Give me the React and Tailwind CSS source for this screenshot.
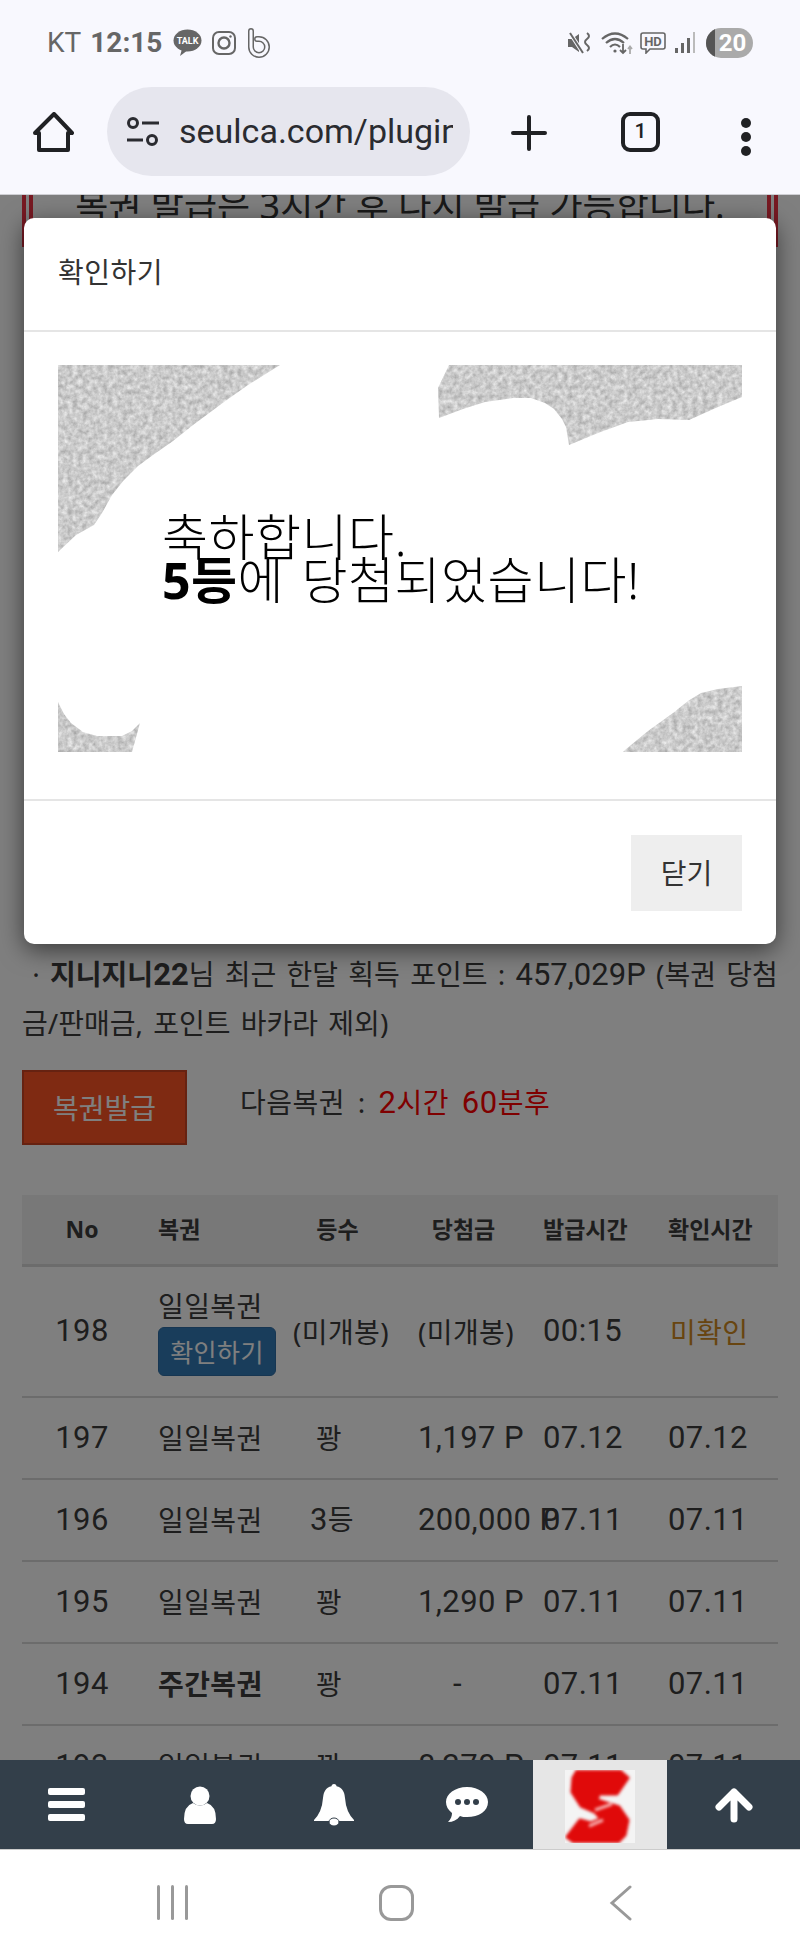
const FONT = 'font-["Noto_Sans","Noto_Sans_CJK_KR",sans-serif]';

const rows = [
  { no: '197', name: '일일복권', rank: '꽝', rankPad: 'pl-[23px]', prize: '1,197 P', issued: '07.12', checked: '07.12' },
  { no: '196', name: '일일복권', rank: '등', rankNum: '3', rankPad: 'pl-[17px]', prize: '200,000 P', issued: '07.11', checked: '07.11' },
  { no: '195', name: '일일복권', rank: '꽝', rankPad: 'pl-[23px]', prize: '1,290 P', issued: '07.11', checked: '07.11' },
  { no: '194', name: '주간복권', bold: true, rank: '꽝', rankPad: 'pl-[23px]', prize: '-', issued: '07.11', checked: '07.11' },
  { no: '193', name: '일일복권', rank: '꽝', rankPad: 'pl-[23px]', prize: '8,270 P', issued: '07.11', checked: '07.11' },
];

const COLS = 'grid grid-cols-[136px_135px_125px_125px_125px_110px] items-center';

function StatusBar() {
  return (
    <div className="flex h-[80px] items-center justify-between pl-[47px] pr-[47px] pt-[5px] text-[#666]">
      <div className="flex items-center">
        <span className='font-["Roboto",sans-serif] text-[28px]'>KT</span>
        <span className='ml-[9px] font-["Roboto",sans-serif] text-[28px] font-bold'>12:15</span>
        <svg className="ml-[11px]" width="29" height="27" viewBox="0 0 29 27">
          <ellipse cx="14.5" cy="11.5" rx="14" ry="11" fill="#666" />
          <path d="M9 20 L7 27 L15 21 Z" fill="#666" />
          <text x="14.5" y="15" textAnchor="middle" fontSize="9" fontWeight="700" fill="#fff" fontFamily="Roboto">TALK</text>
        </svg>
        <svg className="ml-[10px]" width="24" height="24" viewBox="0 0 24 24" fill="none" stroke="#666" strokeWidth="2">
          <rect x="1" y="1" width="22" height="22" rx="6" />
          <circle cx="12" cy="12" r="5.5" strokeWidth="2.4" />
          <circle cx="18.5" cy="5.5" r="1.2" fill="#666" stroke="none" />
        </svg>
        <svg className="ml-[11px]" width="23" height="30" viewBox="0 0 23 30" fill="none">
          <path d="M4 3 V19 a8 8 0 1 0 8 -8 h-2" stroke="#666" strokeWidth="6" strokeLinecap="round" />
          <path d="M4 3 V19 a8 8 0 1 0 8 -8 h-2" stroke="#f8f8fe" strokeWidth="3" strokeLinecap="round" />
        </svg>
      </div>
      <div className="flex items-center">
        <svg width="24" height="22" viewBox="0 0 24 22">
          <path d="M0 7 H4 L11 2 V20 L4 15 H0 Z" fill="#666" />
          <path d="M2 1 L15 21" stroke="#f8f8fe" strokeWidth="4" />
          <path d="M2 1 L15 21" stroke="#666" strokeWidth="2" />
          <path d="M19 1 q4 3 0 6 q-4 3 0 6 q4 3 0 6" fill="none" stroke="#666" strokeWidth="2" />
        </svg>
        <svg className="ml-[9px]" width="33" height="24" viewBox="0 0 33 24" fill="none" stroke="#666" strokeWidth="2.2">
          <path d="M1 8 Q14 -3 27 8" />
          <path d="M5 12 Q14 4 23 12" />
          <path d="M9 16 Q14 11 19 16" />
          <circle cx="14" cy="20" r="1.6" fill="#666" stroke="none" />
          <path d="M22 13 V22 M19 19 L22 22 L25 19" strokeWidth="1.8" />
          <path d="M29 23 V16 M27 18 L29 15.500 L31 18" stroke="#aaa" strokeWidth="1.8" />
        </svg>
        <svg className="ml-[6px]" width="26" height="22" viewBox="0 0 26 22">
          <path d="M3 1 H23 a2 2 0 0 1 2 2 V15 a2 2 0 0 1 -2 2 H10 L6 21 V17 H3 a2 2 0 0 1 -2 -2 V3 a2 2 0 0 1 2 -2 Z" fill="none" stroke="#666" strokeWidth="1.6" />
          <text x="13" y="14" textAnchor="middle" fontSize="13" fontWeight="700" fill="#666" fontFamily="Roboto">HD</text>
        </svg>
        <svg className="ml-[9px]" width="20" height="22" viewBox="0 0 20 22">
          <rect x="0" y="16" width="3" height="5" fill="#666" />
          <rect x="6" y="11" width="3" height="10" fill="#666" />
          <rect x="12" y="6" width="3" height="15" fill="#666" />
          <rect x="18" y="0" width="2" height="21" fill="#bbb" />
        </svg>
        <div className="relative ml-[11px] flex h-[30px] w-[47px] items-center justify-center overflow-hidden rounded-full bg-[#aaa]">
          <div className="absolute inset-y-0 left-0 w-[9px] bg-[#555]" />
          <span className='relative pl-[6px] font-["Roboto",sans-serif] text-[24px] font-bold text-white'>20</span>
        </div>
      </div>
    </div>
  );
}

function BrowserBar() {
  return (
    <div className="flex h-[115px] items-start border-b border-[#cfcfd4] pt-[7px]">
      <svg className="ml-[33px] mt-[25px] shrink-0" width="41" height="41" viewBox="0 0 41 41" fill="none" stroke="#202124" strokeWidth="4" strokeLinejoin="round">
        <path d="M21 2 L39 21 H35 V38 H6 V21 H2 Z" />
      </svg>
      <div className="ml-[33px] flex h-[89px] w-[363px] shrink-0 items-center overflow-hidden rounded-full bg-[#e6e6ee] pl-[20px] pr-[17px]">
        <svg className="shrink-0" width="32" height="30" viewBox="0 0 32 30" fill="none" stroke="#2a2b30" strokeWidth="3">
          <circle cx="6" cy="6" r="4.500" />
          <path d="M15 6 H32" />
          <path d="M0 23 H16" />
          <circle cx="25" cy="23" r="4.500" />
        </svg>
        <div className='ml-[20px] overflow-hidden whitespace-nowrap font-["Roboto",sans-serif] text-[34px] text-[#2a2b30]'>seulca.com/plugin/lotto</div>
      </div>
      <svg className="ml-[41px] mt-[28px] shrink-0" width="36" height="36" viewBox="0 0 36 36" stroke="#202124" strokeWidth="4" strokeLinecap="round">
        <path d="M18 2 V34 M2 18 H34" />
      </svg>
      <div className='ml-[74px] mt-[25px] flex h-[40px] w-[39px] shrink-0 items-center justify-center rounded-[9px] border-[4px] border-[#202124] font-["Roboto",sans-serif] text-[21px] font-medium text-[#202124]'>1</div>
      <div className="ml-[81px] mt-[31px] flex shrink-0 flex-col gap-[4px]">
        <div className="h-[10px] w-[10px] rounded-full bg-[#202124]" />
        <div className="h-[10px] w-[10px] rounded-full bg-[#202124]" />
        <div className="h-[10px] w-[10px] rounded-full bg-[#202124]" />
      </div>
    </div>
  );
}

function NoiseCorners() {
  return (
    <svg className="absolute inset-0" width="684" height="387" viewBox="0 0 684 387">
      <defs>
        <filter id="grain" x="0" y="0" width="100%" height="100%" colorInterpolationFilters="sRGB">
          <feTurbulence type="fractalNoise" baseFrequency="0.2" numOctaves="3" seed="4" />
          <feColorMatrix values="0.35 0 0 0 0.62  0.35 0 0 0 0.62  0.35 0 0 0 0.62  0 0 0 0 1" />
        </filter>
        <clipPath id="corners">
          <path d="M0 0 H222 L190 20 L166 37 L135 60 L115 76 L95 90 L80 101 L66 115 L54 130 L44 148 L36 160 L18 170 L0 187 Z" />
          <path d="M391 0 L380 23 L381 53 L405 44 L427 37 L455 33 L473 33 L487 38 L496 44 L504 54 L508 62 L511 80 L540 68 L570 57 L600 54 L631 55 L660 42 L684 32 V0 Z" />
          <path d="M0 337 L6 349 L13 358 L25 367 L39 371 L64 371 L74 366 L82 358 L74 387 H0 Z" />
          <path d="M684 321 L660 324 L643 328 L630 336 L615 348 L590 366 L567 385 L565 387 H684 Z" />
        </clipPath>
      </defs>
      <rect width="684" height="387" filter="url(#grain)" clipPath="url(#corners)" />
    </svg>
  );
}

function Modal() {
  return (
    <div className="absolute left-[24px] top-[23px] flex h-[726px] w-[752px] flex-col rounded-[10px] bg-white shadow-[0_6px_24px_rgba(0,0,0,0.55)]">
      <div className="flex h-[114px] shrink-0 items-start border-b-[2px] border-[#e5e5e5] pl-[34px] pt-[34px] text-[28px] leading-[40px] tracking-[0.5px] text-[#333]">확인하기</div>
      <div className="shrink-0 px-[34px] pt-[33px]">
        <div className="relative flex h-[387px] w-[684px] items-center pl-[104px] text-[50px] font-light leading-[43px] tracking-[0.5px] text-black [word-spacing:4px]">
          <NoiseCorners />
          <div className="relative whitespace-nowrap">
            축하합니다.
            <br />
            <span className="font-bold">5등</span>에 당첨되었습니다!
          </div>
        </div>
      </div>
      <div className="mt-[47px] flex flex-1 items-start justify-end border-t-[2px] border-[#e5e5e5] pr-[34px] pt-[34px]">
        <div className="flex h-[76px] w-[111px] items-center justify-center bg-[#eeeeee] text-[28px] text-[#333]">닫기</div>
      </div>
    </div>
  );
}

function Num({ children }) {
  return <span className='font-["Roboto",sans-serif] text-[31px] font-normal'>{children}</span>;
}

function LotteryTable() {
  return (
    <div className="mx-[22px] mt-[50px] text-[#3c3c3c]">
      <div className={`${COLS} h-[72px] border-b-[3px] border-[#d8d8d8] bg-[#f0f0f0] text-[23px] font-bold`}>
        <div className="pr-[16px] text-center">No</div>
        <div>복권</div>
        <div className="pr-[36px] text-center">등수</div>
        <div className="pr-[34px] text-center">당첨금</div>
        <div>발급시간</div>
        <div>확인시간</div>
      </div>
      <div className={`${COLS} h-[131px] border-b-[2px] border-[#d8d8d8] whitespace-nowrap text-[28px] tracking-[0.4px]`}>
        <div className="pr-[16px] text-center"><Num>198</Num></div>
        <div className="leading-[38px]">
          <div>일일복권</div>
          <div className="mt-[2px] flex h-[49px] w-[118px] items-center justify-center rounded-[6px] border border-[#2e6da4] bg-[#337ab7] text-[25px] text-white">확인하기</div>
        </div>
        <div>(미개봉)</div>
        <div>(미개봉)</div>
        <div><Num>00:15</Num></div>
        <div className="pl-[2px] text-[#d08a22]">미확인</div>
      </div>
      {rows.map((row) => (
        <div key={row.no} className={`${COLS} h-[82px] border-b-[2px] border-[#d8d8d8] whitespace-nowrap text-[28px] tracking-[0.4px]`}>
          <div className="pr-[16px] text-center"><Num>{row.no}</Num></div>
          <div className={row.bold ? 'font-bold' : ''}>{row.name}</div>
          <div className={row.rankPad}>{row.rankNum && <Num>{row.rankNum}</Num>}{row.rank}</div>
          <div className={row.prize === '-' ? 'pl-[35px]' : ''}><Num>{row.prize}</Num></div>
          <div><Num>{row.issued}</Num></div>
          <div><Num>{row.checked}</Num></div>
        </div>
      ))}
    </div>
  );
}

function BottomNav() {
  return (
    <div className="relative z-10 flex h-[90px] shrink-0 border-b border-[#cccccc] bg-[#333f4a]">
      <div className="flex w-[133px] items-center justify-center">
        <div className="flex flex-col gap-[6px]">
          <div className="h-[7px] w-[37px] rounded-[2px] bg-white" />
          <div className="h-[7px] w-[37px] rounded-[2px] bg-white" />
          <div className="h-[7px] w-[37px] rounded-[2px] bg-white" />
        </div>
      </div>
      <div className="flex w-[134px] items-center justify-center">
        <svg width="32" height="38" viewBox="0 0 32 38" fill="#fff">
          <circle cx="16" cy="10" r="9.500" />
          <path d="M9 17 Q16 22 23 17 Q32 20 32 33 Q32 38 28 38 H4 Q0 38 0 33 Q0 20 9 17 Z" />
        </svg>
      </div>
      <div className="flex w-[133px] items-center justify-center">
        <svg width="40" height="42" viewBox="0 0 40 42" fill="#fff">
          <circle cx="20" cy="2.500" r="2.500" />
          <path d="M20 2 Q30 2 31 14 Q32 28 40 36 V37 H0 V36 Q8 28 9 14 Q10 2 20 2 Z" />
          <ellipse cx="20" cy="38" rx="5" ry="4" fill="#fff" stroke="#333f4a" strokeWidth="1" />
        </svg>
      </div>
      <div className="flex w-[133px] items-center justify-center">
        <svg width="44" height="36" viewBox="0 0 44 36">
          <path d="M22 0 C34 0 43 7 43 15 C43 24 34 30 22 30 C19 30 17 30 15 29 C12 33 8 35 3 35 C6 32 7 29 7 26 C3 23 1 19 1 15 C1 7 10 0 22 0 Z" fill="#fff" />
          <circle cx="13" cy="15" r="3" fill="#333f4a" />
          <circle cx="22" cy="15" r="3" fill="#333f4a" />
          <circle cx="31" cy="15" r="3" fill="#333f4a" />
        </svg>
      </div>
      <div className="flex w-[134px] items-end justify-center bg-[#e6e6e6] pb-[6px]">
        <div className="h-[73px] w-[70px] overflow-hidden bg-[#f4f4f4]">
          <svg className="blur-[1.5px]" width="70" height="73" viewBox="0 0 70 73">
            <path d="M12 1 H55 L63 8 L52 24 H34 L32 30 L54 37 L63 50 L60 65 L53 72 H9 L2 67 L15 50 L26 53 L36 49 L30 42 L16 36 L7 22 L8 8 Z" fill="#e00a0a" stroke="#e00a0a" strokeWidth="3" strokeLinejoin="round" />
            <path d="M30 40 L47 34 M24 56 L38 50" stroke="#f6b0b0" strokeWidth="3" />
          </svg>
        </div>
      </div>
      <div className="flex w-[133px] items-center justify-center">
        <svg width="38" height="36" viewBox="0 0 38 36" fill="none" stroke="#fff" strokeWidth="7" strokeLinecap="round" strokeLinejoin="round">
          <path d="M19 32 V5 M4 20 L19 5 L34 20" />
        </svg>
      </div>
    </div>
  );
}

function AndroidBar() {
  return (
    <div className="flex flex-1 items-center bg-white pb-[1px]">
      <div className="ml-[157px] flex h-[35px] w-[31px] justify-between">
        <div className="h-full w-[3px] rounded-full bg-[#999]" />
        <div className="h-full w-[3px] rounded-full bg-[#999]" />
        <div className="h-full w-[3px] rounded-full bg-[#999]" />
      </div>
      <div className="ml-[191px] h-[36px] w-[35px] rounded-[12px] border-[3px] border-[#999]" />
      <svg className="ml-[195px]" width="24" height="36" viewBox="0 0 24 36" fill="none" stroke="#999" strokeWidth="3" strokeLinecap="round">
        <path d="M21 2 L3 18 L21 34" />
      </svg>
    </div>
  );
}

export default function App() {
  return (
    <div className={`${FONT} flex h-[1956px] w-[800px] flex-col overflow-hidden bg-white`}>
      <div className="shrink-0 bg-[#f8f8fe]">
        <StatusBar />
        <BrowserBar />
      </div>

      <div className="relative h-[1565px] shrink-0 overflow-hidden">
        <div className="-mt-[13px] mx-[22px] h-[65px] border-x-[11px] border-double border-[#ee3344] text-center text-[36px] leading-[48px] text-[#333] whitespace-nowrap">
          복권 발급은 3시간 후 다시 발급 가능합니다.
        </div>
        <div className="mx-[22px] mt-[703px] break-all text-[28px] leading-[48px] text-[#3c3c3c] [word-spacing:3px]">
          &nbsp;· <b>지니지니<span className='font-["Roboto",sans-serif] text-[31px]'>22</span></b>님 최근 한달 획득 포인트 : <Num>457,029P</Num> (복권 당첨금/판매금, 포인트 바카라 제외)
        </div>
        <div className="mx-[22px] mt-[23px] flex items-center">
          <div className="flex h-[75px] w-[165px] items-center justify-center border-2 border-[#cc4422] bg-[#ff5424] text-[28px] text-white">복권발급</div>
          <div className="ml-[53px] pb-[8px] text-[28px] tracking-[0.5px] text-[#3c3c3c] [word-spacing:5px]">
            다음복권 : <span className="text-[#ff0000]"><Num>2</Num>시간 <Num>60</Num>분후</span>
          </div>
        </div>
        <LotteryTable />

        <div className="absolute inset-0 bg-black/50" />
        <Modal />
      </div>

      <BottomNav />
      <AndroidBar />
    </div>
  );
}
